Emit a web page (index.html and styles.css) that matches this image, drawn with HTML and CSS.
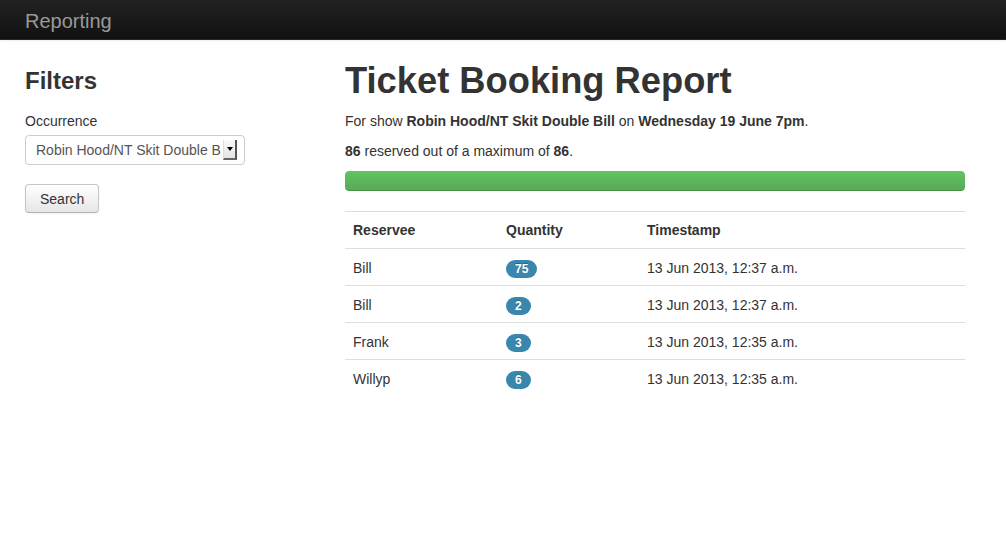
FILE: index.html
```html
<!DOCTYPE html>
<html>
<head>
<meta charset="utf-8">
<title>Reporting</title>
<link rel="stylesheet" href="styles.css">
</head>
<body>
<div class="navbar">
  <span class="brand">Reporting</span>
</div>
<div class="page">
  <aside class="sidebar">
    <h3 class="side-title">Filters</h3>
    <label class="field-label">Occurrence</label>
    <div class="select">
      <span class="select-value">Robin Hood/NT Skit Double B</span>
      <span class="select-arrow"><span class="caret"></span></span>
    </div>
    <button class="btn">Search</button>
  </aside>
  <main class="main">
    <h1 class="title">Ticket Booking Report</h1>
    <p class="line">For show <b>Robin Hood/NT Skit Double Bill</b> on <b>Wednesday 19 June 7pm</b>.</p>
    <p class="line"><b>86</b> reserved out of a maximum of <b>86</b>.</p>
    <div class="progress"><div class="bar" style="width:100%"></div></div>
    <table class="table">
      <thead>
        <tr><th class="c1">Reservee</th><th class="c2">Quantity</th><th class="c3">Timestamp</th></tr>
      </thead>
      <tbody>
        <tr><td>Bill</td><td><span class="badge">75</span></td><td>13 Jun 2013, 12:37 a.m.</td></tr>
        <tr><td>Bill</td><td><span class="badge">2</span></td><td>13 Jun 2013, 12:37 a.m.</td></tr>
        <tr><td>Frank</td><td><span class="badge">3</span></td><td>13 Jun 2013, 12:35 a.m.</td></tr>
        <tr><td>Willyp</td><td><span class="badge">6</span></td><td>13 Jun 2013, 12:35 a.m.</td></tr>
      </tbody>
    </table>
  </main>
</div>
</body>
</html>
```

FILE: styles.css
```css
* { box-sizing: border-box; }
html, body { margin: 0; padding: 0; background: #fff; }
body {
  font-family: "Liberation Sans", Arial, Helvetica, sans-serif;
  font-size: 14px;
  line-height: 20px;
  color: #333;
}
.navbar {
  height: 40px;
  background: linear-gradient(to bottom, #222 0%, #111 100%);
  border-bottom: 1px solid #252525;
  box-shadow: 0 1px 2px rgba(0,0,0,0.08);
  display: flex;
  align-items: center;
  padding-left: 25px;
}
.brand {
  font-size: 20px;
  color: #999;
  line-height: 20px;
  margin-top: 2px;
}
.page {
  display: flex;
  padding: 21px 41px 0 25px;
}
.sidebar {
  width: 320px;
  flex: none;
}
.main {
  width: 620px;
  flex: none;
}
.side-title {
  margin: 0 0 10px;
  font-size: 24px;
  line-height: 40px;
  font-weight: bold;
  color: #333;
}
.title {
  margin: 0 0 10px;
  font-size: 36.3px;
  line-height: 40px;
  font-weight: bold;
  color: #333;
}
.field-label {
  display: block;
  margin-bottom: 4px;
  line-height: 20px;
}
.select {
  width: 220px;
  height: 30px;
  border: 1px solid #ccc;
  border-radius: 4px;
  background: #fff;
  display: flex;
  align-items: center;
  padding: 0 7px 0 10px;
  color: #555;
  margin-bottom: 19px;
}
.select-value {
  flex: 1;
  white-space: nowrap;
  min-width: 0;
}
.select-arrow {
  flex: none;
  width: 14px;
  height: 20px;
  margin-left: 1px;
  background: linear-gradient(to bottom, #fafafa, #e4e4e4);
  border-left: 1px solid #ddd;
  border-right: 2px solid #555;
  border-bottom: 2px solid #666;
  display: flex;
  align-items: center;
  justify-content: center;
}
.caret {
  width: 0;
  height: 0;
  border-left: 3px solid transparent;
  border-right: 3px solid transparent;
  border-top: 4px solid #000;
}
.btn {
  font-family: inherit;
  font-size: 14px;
  line-height: 20px;
  color: #333;
  padding: 4px 14px;
  height: 29px;
  border: 1px solid #c5c5c5;
  border-bottom-color: #b3b3b3;
  border-radius: 4px;
  background: linear-gradient(to bottom, #ffffff, #e6e6e6);
  box-shadow: inset 0 1px 0 rgba(255,255,255,.2), 0 1px 2px rgba(0,0,0,.05);
}
.line {
  margin: 0 0 10px;
}
.progress {
  height: 20px;
  margin-bottom: 20px;
  border-radius: 4px;
  background: linear-gradient(to bottom, #f5f5f5, #f9f9f9);
  overflow: hidden;
}
.bar {
  height: 100%;
  background: linear-gradient(to bottom, #62c462, #57a957);
  box-shadow: inset 0 -1px 0 rgba(0,0,0,.15);
  border-radius: 4px;
}
.table {
  width: 100%;
  border-collapse: collapse;
  border-spacing: 0;
}
.table th, .table td {
  padding: 8px;
  line-height: 20px;
  text-align: left;
  vertical-align: top;
  border-top: 1px solid #ddd;
}
.table td { padding-top: 9px; padding-bottom: 7px; }
.table th { font-weight: bold; }
.c1 { width: 153px; }
.c2 { width: 141px; }
.badge {
  display: inline-block;
  padding: 2px 9px;
  font-size: 12px;
  font-weight: bold;
  line-height: 14px;
  color: #fff;
  background: #3a87ad;
  border-radius: 9px;
  vertical-align: baseline;
  text-shadow: 0 -1px 0 rgba(0,0,0,.25);
}
```
